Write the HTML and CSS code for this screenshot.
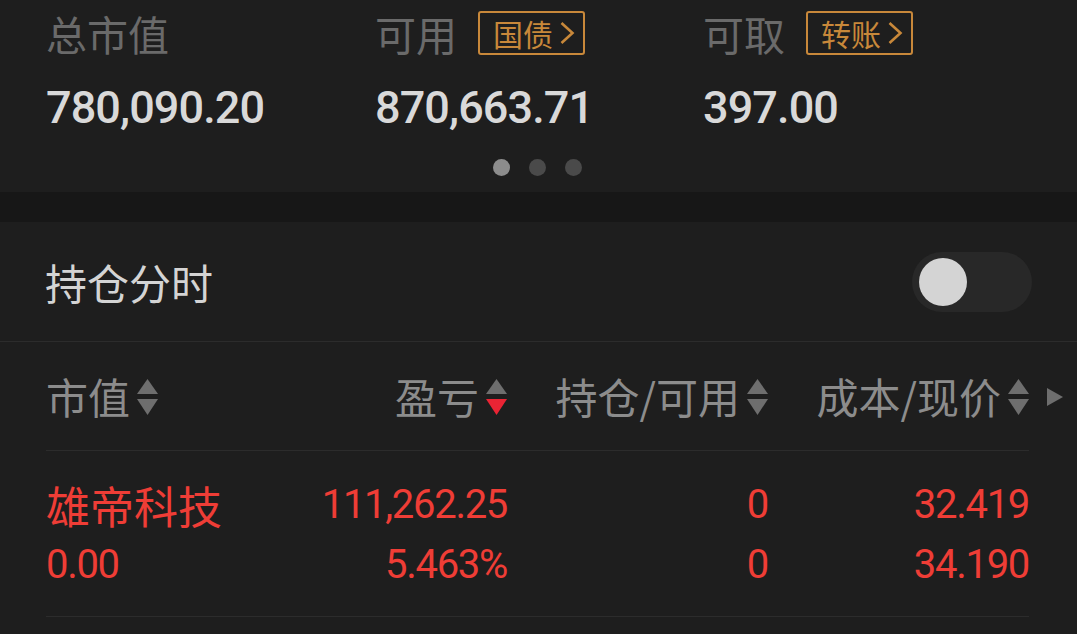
FILE: index.html
```html
<!DOCTYPE html>
<html lang="zh-CN">
<head>
<meta charset="utf-8">
<title>持仓</title>
<link rel="stylesheet" href="styles.css">
</head>
<body>
<section class="summary">
  <div class="cols">
    <div class="col">
      <div class="label-row"><span class="label">总市值</span></div>
      <div class="value">780,090.20</div>
    </div>
    <div class="col">
      <div class="label-row"><span class="label">可用</span><span class="badge">国债<svg class="chev" width="16" height="24" viewBox="0 0 16 24"><path d="M2.5 2 L13.5 12 L2.5 22" fill="none" stroke="currentColor" stroke-width="2.6"/></svg></span></div>
      <div class="value">870,663.71</div>
    </div>
    <div class="col">
      <div class="label-row"><span class="label">可取</span><span class="badge">转账<svg class="chev" width="16" height="24" viewBox="0 0 16 24"><path d="M2.5 2 L13.5 12 L2.5 22" fill="none" stroke="currentColor" stroke-width="2.6"/></svg></span></div>
      <div class="value">397.00</div>
    </div>
  </div>
  <div class="dots"><span class="dot on"></span><span class="dot"></span><span class="dot"></span></div>
</section>
<div class="band"></div>
<section class="toggle-row">
  <span class="toggle-label">持仓分时</span>
  <span class="switch"><span class="knob"></span></span>
</section>
<section class="table">
  <div class="head">
    <div class="grid">
      <div class="th left">市值<svg class="sort" width="21" height="36" viewBox="0 0 21 36"><path d="M10.5 0 L21 15 L0 15 Z" fill="#6e6e6e"/><path d="M0 20 L21 20 L10.5 36 Z" fill="#6e6e6e"/></svg></div>
      <div class="th">盈亏<svg class="sort" width="21" height="36" viewBox="0 0 21 36"><path d="M10.5 0 L21 15 L0 15 Z" fill="#6e6e6e"/><path d="M0 20 L21 20 L10.5 36 Z" fill="#ea2434"/></svg></div>
      <div class="th">持仓/可用<svg class="sort" width="21" height="36" viewBox="0 0 21 36"><path d="M10.5 0 L21 15 L0 15 Z" fill="#6e6e6e"/><path d="M0 20 L21 20 L10.5 36 Z" fill="#6e6e6e"/></svg></div>
      <div class="th">成本/现价<svg class="sort" width="21" height="36" viewBox="0 0 21 36"><path d="M10.5 0 L21 15 L0 15 Z" fill="#6e6e6e"/><path d="M0 20 L21 20 L10.5 36 Z" fill="#6e6e6e"/></svg></div>
    </div>
    <svg class="more" width="16" height="18" viewBox="0 0 16 18"><path d="M0 0 L16 9 L0 18 Z" fill="#6e6e6e"/></svg>
  </div>
  <div class="row">
    <div class="grid">
      <div class="td left name">雄帝科技</div>
      <div class="td num">111,262.25</div>
      <div class="td num">0</div>
      <div class="td num">32.419</div>
      <div class="td left num">0.00</div>
      <div class="td num">5.463%</div>
      <div class="td num">0</div>
      <div class="td num">34.190</div>
    </div>
  </div>
</section>
</body>
</html>
```
FILE: styles.css
```css
* { box-sizing: border-box; }
html, body {
  margin: 0;
  padding: 0;
  background: #1e1e1e;
  font-family: "Noto Sans CJK SC", "Noto Sans", sans-serif;
  overflow: hidden;
}
body { width: 1077px; height: 634px; }

.summary {
  height: 192px;
  padding: 8px 0 0 46px;
}
.cols {
  display: grid;
  grid-template-columns: 329px 328px 300px;
}
.label-row {
  display: flex;
  align-items: center;
  height: 50px;
}
.label {
  font-size: 41px;
  line-height: 50px;
  color: #6a6a6a;
}
.badge {
  margin-left: 21px;
  height: 44px;
  width: 107px;
  border: 2.5px solid #c8883a;
  border-radius: 3px;
  color: #c8883a;
  font-size: 30px;
  line-height: 1;
  display: flex;
  align-items: center;
  padding-left: 13px;
  gap: 6px;
}
.chev { display: block; }
.value {
  margin-top: 25px;
  font-family: Roboto, "Liberation Sans", sans-serif;
  font-weight: 500;
  font-size: 45px;
  line-height: 50px;
  letter-spacing: -0.9px;
  color: #d9d9d9;
}
.dots {
  display: flex;
  justify-content: center;
  gap: 19px;
  margin-top: 26px;
  width: 982px;
}
.dot {
  width: 17px;
  height: 17px;
  border-radius: 50%;
  background: #4a4a4a;
}
.dot.on { background: #8c8c8c; }

.band { height: 30px; background: #171717; }

.toggle-row {
  height: 119px;
  display: flex;
  align-items: center;
  justify-content: space-between;
  padding: 0 45px 0 45px;
}
.toggle-label {
  font-size: 42px;
  color: #d4d4d4;
}
.switch {
  width: 120px;
  height: 60px;
  border-radius: 30px;
  background: #282828;
  padding: 6px 7px;
  display: flex;
}
.knob {
  width: 48px;
  height: 48px;
  border-radius: 50%;
  background: #d4d4d4;
}

.table { border-top: 1px solid #2c2c2c; }
.head {
  position: relative;
  margin: 0 48px 0 46px;
  height: 109px;
  border-bottom: 1px solid #2c2c2c;
  display: flex;
  align-items: center;
}
.grid {
  display: grid;
  grid-template-columns: 201px 260px 261px 261px;
  width: 983px;
}
.th {
  display: flex;
  justify-content: flex-end;
  align-items: center;
  gap: 7px;
  font-size: 42px;
  line-height: 50px;
  color: #8c8c8c;
}
.th.left { justify-content: flex-start; }
.sort { display: block; margin-top: 2px; }
.more {
  position: absolute;
  right: -34px;
  top: 46px;
}
.row {
  margin: 0 48px 0 46px;
  padding: 24px 0 21px;
  border-bottom: 1px solid #2c2c2c;
}
.td {
  height: 60px;
  line-height: 60px;
  text-align: right;
  color: #ef3d36;
}
.td.left { text-align: left; }
.name { font-size: 44px; }
.num {
  font-family: Roboto, "Liberation Sans", sans-serif;
  font-size: 40px;
  letter-spacing: -1.3px;
}
```
